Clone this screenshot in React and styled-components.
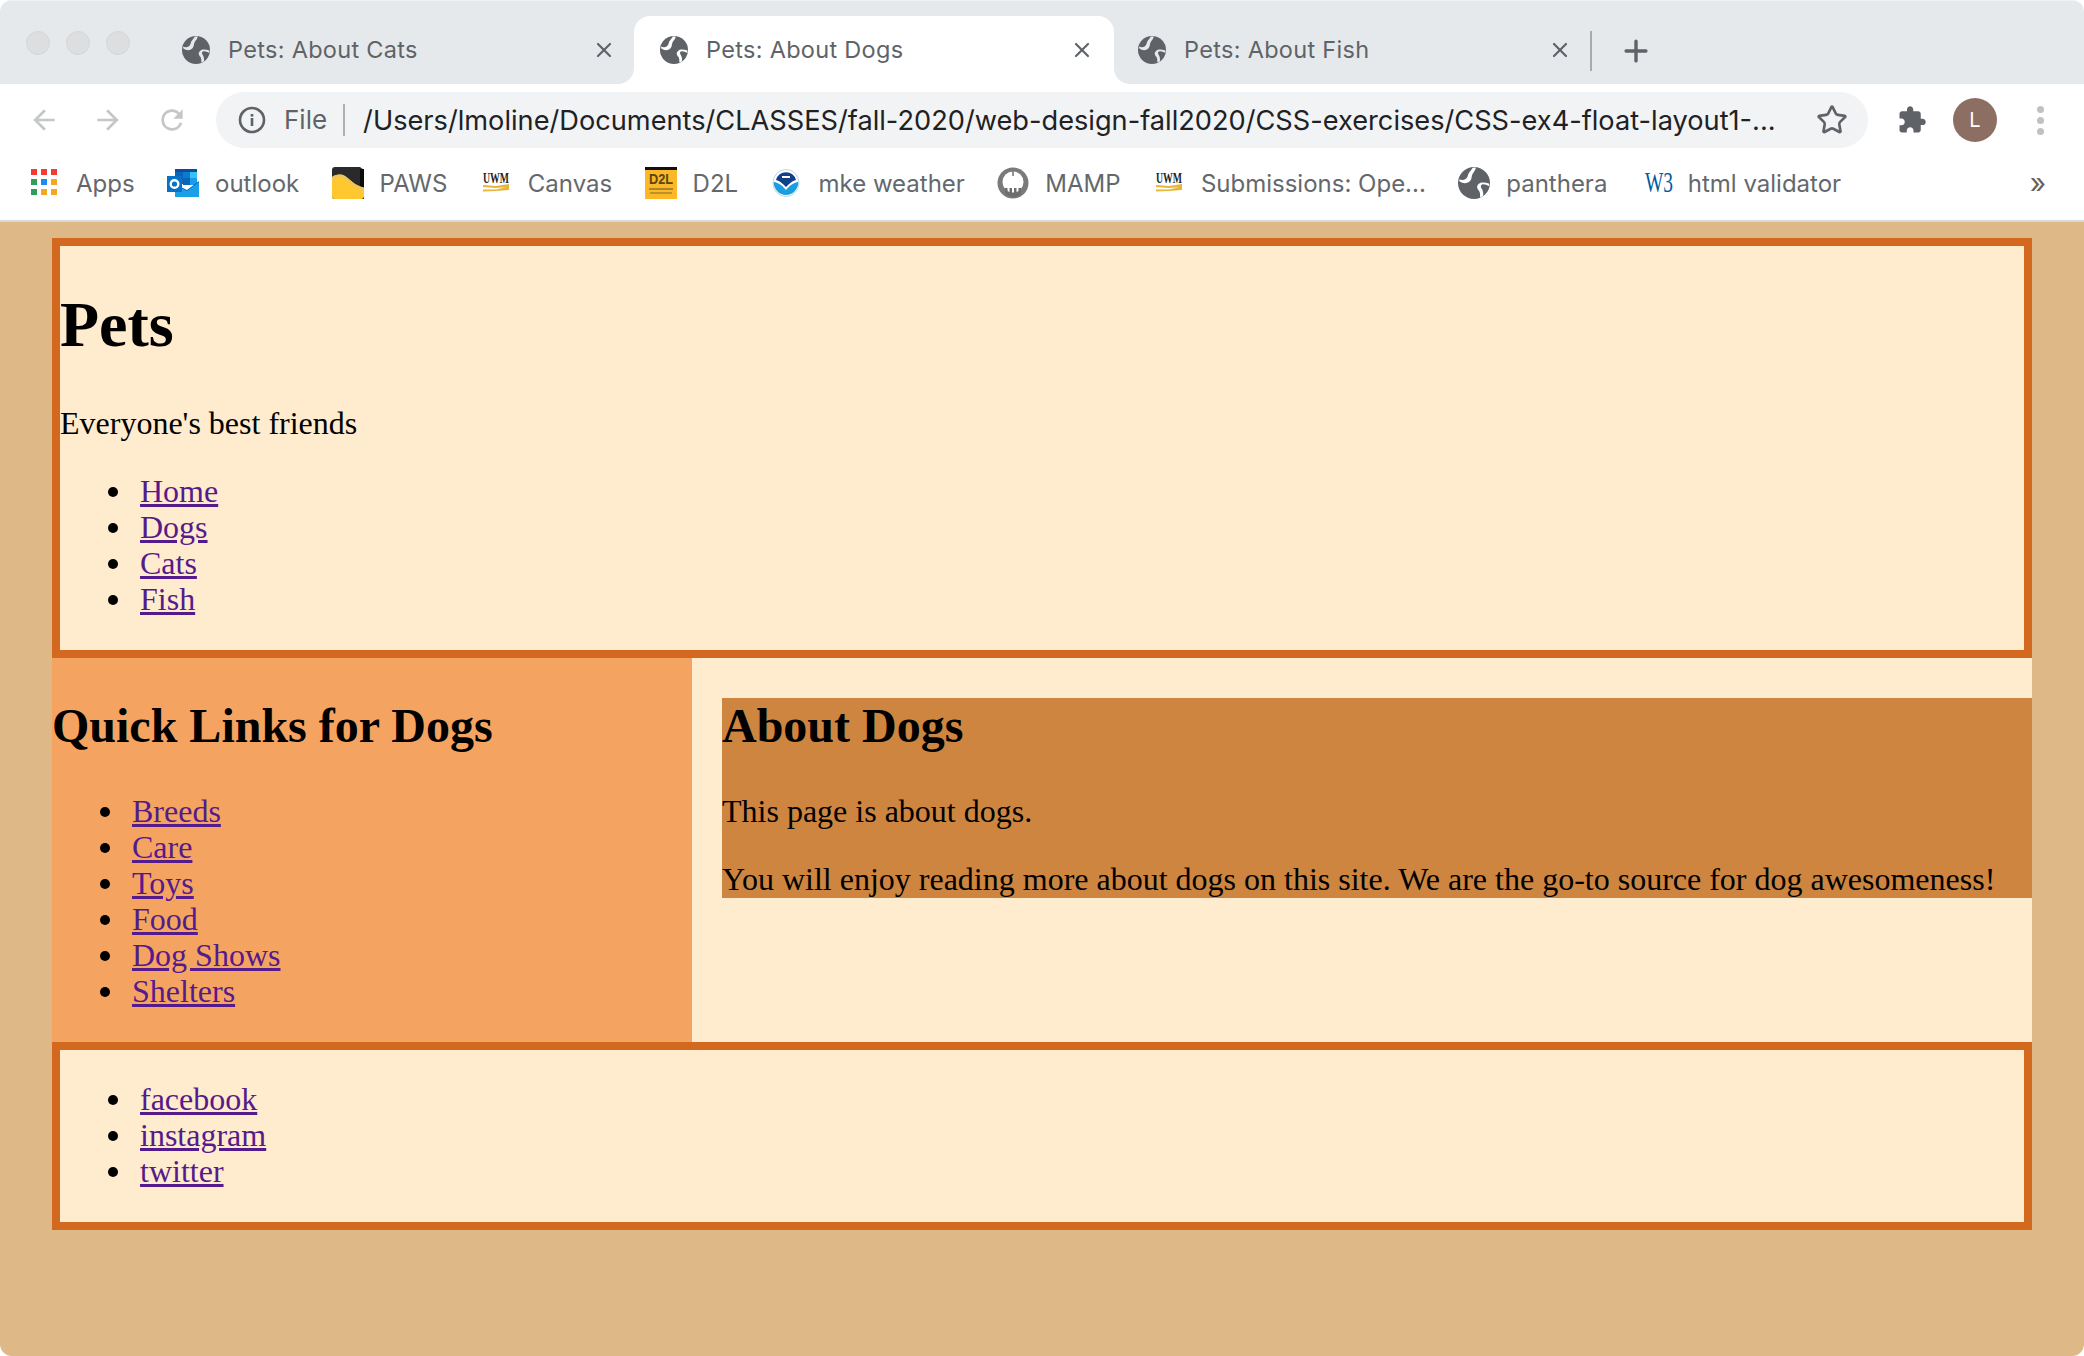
import styled, { createGlobalStyle } from "styled-components";
import { Star, X, Plus } from "lucide-react";

const GlobalStyle = createGlobalStyle`
  html, body {
    margin: 0;
    padding: 0;
    background: #fff;
  }
`;

const Window = styled.div`
  display: flex;
  flex-direction: column;
  width: 2084px;
  height: 1356px;
  overflow: hidden;
  border-radius: 12px;
  background: #fff;
  font-family: Inter, "Liberation Sans", sans-serif;
`;

/* browser chrome */
const TabStrip = styled.div`
  display: flex;
  align-items: flex-end;
  height: 84px;
  box-sizing: border-box;
  border-top: 1px solid #f2f3f4;
  background: #e6e9ec;
`;

const TrafficLights = styled.div`
  display: flex;
  align-self: flex-start;
  gap: 16px;
  width: 156px;
  box-sizing: border-box;
  margin-top: 30px;
  padding-left: 26px;
`;

const Light = styled.span`
  width: 24px;
  height: 24px;
  box-sizing: border-box;
  border: 1px solid #d5d6d8;
  border-radius: 50%;
  background: #dddee0;
`;

const Tab = styled.div`
  position: relative;
  display: flex;
  align-items: center;
  width: 480px;
  height: 68px;
  box-sizing: border-box;
  margin-right: -2px;
  padding: 0 20px 0 26px;
  border-radius: 16px 16px 0 0;
  background: ${(p) => (p.$active ? "#fff" : "transparent")};
  color: #5f6368;

  ${(p) =>
    p.$active &&
    `
    &::before, &::after {
      content: "";
      position: absolute;
      bottom: 0;
      width: 16px;
      height: 16px;
    }
    &::before {
      left: -16px;
      background: radial-gradient(circle at 0 0, #e6e9ec 15.5px, #fff 16.5px);
    }
    &::after {
      right: -16px;
      background: radial-gradient(circle at 100% 0, #e6e9ec 15.5px, #fff 16.5px);
    }
  `}
`;

const TabTitle = styled.span`
  flex: 1;
  margin: 0 0 2px 18px;
  font-size: 23.5px;
  letter-spacing: 0.3px;
  white-space: nowrap;
`;

const TabDivider = styled.span`
  width: 2px;
  height: 40px;
  margin: 0 0 13px 0;
  background: #a6a9ad;
`;

const NewTab = styled.span`
  display: flex;
  margin: 0 0 16px 27px;
  color: #5f6368;
`;

const Toolbar = styled.div`
  display: flex;
  align-items: center;
  height: 64px;
  box-sizing: border-box;
  padding: 8px 0 0 28px;
  background: #fff;
`;

const NavIcon = styled.svg`
  flex: none;
  width: 32px;
  height: 32px;
  margin-right: ${(p) => p.$gap || 32}px;
  fill: #c4c6c8;
`;

const Omnibox = styled.div`
  display: flex;
  align-items: center;
  width: 1652px;
  height: 56px;
  box-sizing: border-box;
  padding: 0 20px 0 22px;
  border-radius: 28px;
  background: #f1f3f4;
`;

const Scheme = styled.span`
  margin-left: 18px;
  padding-right: 16px;
  border-right: 2px solid #aeb1b4;
  color: #5f6368;
  font-size: 26px;
  line-height: 32px;
`;

const Url = styled.span`
  flex: 1;
  margin-left: 18px;
  color: #202124;
  font-size: 27.2px;
  white-space: nowrap;
`;

const ToolbarRight = styled.div`
  display: flex;
  align-items: center;
  margin-left: 29px;
`;

const Avatar = styled.span`
  display: flex;
  align-items: center;
  justify-content: center;
  width: 44px;
  height: 44px;
  margin-left: 26px;
  border-radius: 50%;
  background: #8d6e63;
  color: #fff;
  font-size: 20px;
`;

const MenuDots = styled.span`
  display: flex;
  flex-direction: column;
  gap: 4px;
  margin-left: 40px;

  i {
    width: 7px;
    height: 7px;
    border-radius: 50%;
    background: #bfc1c3;
  }
`;

const Bookmarks = styled.div`
  display: flex;
  align-items: center;
  gap: 32.4px;
  height: 74px;
  box-sizing: border-box;
  padding: 0 0 2px 28px;
  border-bottom: 2px solid #d9d9db;
  background: #fff;
`;

const Bookmark = styled.div`
  display: flex;
  align-items: center;
  gap: 16px;
  color: #64686d;
  font-size: 24px;
  white-space: nowrap;
`;

const BookmarkIcon = styled.svg`
  flex: none;
  width: 32px;
  height: 32px;
  overflow: visible;
`;

const Overflow = styled.span`
  margin-left: auto;
  margin-right: 38px;
  color: #5f6368;
  font-size: 28px;
`;

/* the page itself */
const Page = styled.div`
  flex: 1;
  padding: 16px 52px 0;
  background: #deb887;
  color: #000;
  font-family: "Liberation Serif", "Times New Roman", serif;
  font-size: 32px;
  line-height: 36px;
`;

const Banner = styled.header`
  padding-bottom: 1px;
  border: 8px solid #d2691e;
  background: #ffebcd;
`;

const Title = styled.h1`
  margin: 42px 0 44px;
  font-size: 64px;
  line-height: 73px;
`;

const Tagline = styled.p`
  margin: 32px 0;
`;

const LinkList = styled.ul`
  margin: 32px 0;
  padding-left: 80px;
  list-style: none;

  li {
    position: relative;
  }

  li::before {
    content: "";
    position: absolute;
    top: 14px;
    left: -32px;
    width: 10px;
    height: 10px;
    border-radius: 50%;
    background: #000;
  }

  a {
    color: #551a8b;
  }
`;

const Columns = styled.div`
  display: flex;
  height: 384px;
`;

const Sidebar = styled.aside`
  width: 640px;
  background: #f4a460;
`;

const Heading = styled.h2`
  margin: 0 0 40px;
  font-size: 48px;
  line-height: 55px;
`;

const SidebarHeading = styled(Heading)`
  margin-top: 40px;
`;

const Content = styled.main`
  flex: 1;
  padding: 40px 0 0 30px;
  background: #ffebcd;
`;

const ContentBox = styled.section`
  height: 200px;
  background: #cd853f;

  p {
    margin: 0 0 32px;
  }

  p:last-child {
    margin-bottom: 0;
  }
`;

const Footer = styled.footer`
  border: 8px solid #d2691e;
  background: #ffebcd;

  ul {
    margin: 31px 0 33px;
  }
`;

const Globe = ({ size = 28, cut = "#e6e9ec" }) => (
  <svg viewBox="0 0 24 24" width={size} height={size} style={{ flex: "none" }}>
    <circle cx="12" cy="12" r="12" fill="#5f6368" />
    <path
      fill={cut}
      d="M.9 10.5C4 12.8 7 12.5 9 10.5c1.5-1.5 1-4 2-5.5.8-1.3 2-2.2 2.5-4.6L11 .5C9.5 3 8 4 7.5 6c-.5 1.8-1 3-3 3.5-1.5.3-2.5.2-3.4-.4zM23.5 12.5c-3-.8-6-1.5-8 .3-2 1.6-1 3.6.2 5 .9 1.2 1 3 .8 5l2.3-1c.3-2 0-4-1-5.5-.8-1.2-1-2.3 0-3 1.2-.8 3.4 0 5.6 1.2z"
    />
  </svg>
);

const AppsIcon = () => (
  <BookmarkIcon viewBox="0 0 32 32">
    {["#f33b36", "#f33b36", "#f33b36", "#2f9e5b", "#1e88f5", "#f5a623", "#2f9e5b", "#f5a623", "#f5a623"].map((c, i) => (
      <rect key={i} x={3 + (i % 3) * 10} y={2 + Math.floor(i / 3) * 10} width="6" height="6" fill={c} />
    ))}
  </BookmarkIcon>
);

const OutlookIcon = () => (
  <BookmarkIcon viewBox="0 0 32 32">
    <rect x="8" y="2" width="22" height="3" fill="#0a4f9e" />
    <rect x="8" y="5" width="8" height="12" fill="#0a64b8" />
    <rect x="16" y="5" width="7" height="6" fill="#0f78d4" />
    <rect x="23" y="5" width="7" height="6" fill="#35c3f3" />
    <rect x="16" y="11" width="7" height="7" fill="#0a64b8" />
    <rect x="23" y="11" width="7" height="7" fill="#1c9be8" />
    <path d="M8 17l12 6 12-9v16H8z" fill="#0a64b8" />
    <path d="M8 18l12 6 12-9v15H8z" fill="#1aa0e8" />
    <rect x="0" y="9" width="15" height="16" fill="#0672c6" />
    <circle cx="7.5" cy="17" r="3.8" fill="none" stroke="#fff" strokeWidth="2.4" />
  </BookmarkIcon>
);

const PawsIcon = () => (
  <BookmarkIcon viewBox="0 0 32 32">
    <path d="M3 0h25l4 3v29H3a3 3 0 0 1-3-3V3a3 3 0 0 1 3-3z" fill="#2a2a2a" />
    <rect x="28" y="2" width="4" height="20" fill="#0c0c0c" />
    <path d="M0 10c5-3 9-3 13-1 5 3 9 9 19 12v8a3 3 0 0 1-3 3H3a3 3 0 0 1-3-3z" fill="#ffc82e" />
    <path d="M0 13c5-3 9-3 13-1 5 3 9 9 19 11.500v-3c-10-2-14-8-19-11.500-4-2-8-2-13 1z" fill="#ecc464" />
  </BookmarkIcon>
);

const UwmIcon = () => (
  <BookmarkIcon viewBox="0 0 32 32">
    <text x="16" y="16" textAnchor="middle" textLength="26" lengthAdjust="spacingAndGlyphs" fontFamily="Liberation Serif, serif" fontWeight="700" fontSize="14" fill="#1e1e1e">UWM</text>
    <path d="M3 18l13 1 13-2v3l-13 1-13-1zM3 22.500l13 0 13-3v3.500l-13 1-13 .5z" fill="#e7b53a" />
  </BookmarkIcon>
);

const D2lIcon = () => (
  <BookmarkIcon viewBox="0 0 32 32">
    <rect width="32" height="32" fill="#fdb827" />
    <rect width="32" height="3" fill="#111" />
    <text x="16" y="17" textAnchor="middle" textLength="24" lengthAdjust="spacingAndGlyphs" fontFamily="Liberation Sans, sans-serif" fontWeight="700" fontSize="14" fill="#5a4514">D2L</text>
    <rect x="4" y="21" width="24" height="2" fill="#a98428" />
    <rect x="5" y="25" width="22" height="2" fill="#bd9329" />
  </BookmarkIcon>
);

const NoaaIcon = () => (
  <BookmarkIcon viewBox="0 0 32 32">
    <ellipse cx="16" cy="16" rx="13" ry="13.500" fill="#fff" stroke="#bcd6ea" strokeWidth="1" />
    <path d="M6 13a10.500 11 0 0 1 20 0c-4 1-7 4-10 7-3-3-6-6-10-7z" fill="#123f8c" />
    <path d="M3.700 15c5 .5 9 4 12.300 8 3.300-4 7.300-7.500 12.300-8a12.300 13 0 0 1-24.600 0z" fill="#1b9ee0" />
    <rect x="12" y="9" width="8" height="2" fill="#fff" />
  </BookmarkIcon>
);

const MampIcon = () => (
  <BookmarkIcon viewBox="0 0 32 32">
    <circle cx="16" cy="16" r="15.500" fill="#7a7a7a" />
    <circle cx="16" cy="15" r="10.500" fill="#fff" />
    <path d="M8 27v-6h2.500v4.500h2V21H15v5h2v-5h2.500v4.500h2V21H24v6a12 12 0 0 1-16 0z" fill="#6e6e6e" />
    <rect x="15.200" y="4" width="1.600" height="5" fill="#7a7a7a" />
  </BookmarkIcon>
);

const W3Icon = () => (
  <BookmarkIcon viewBox="0 0 32 32">
    <text x="19" y="25" textAnchor="middle" textLength="28" lengthAdjust="spacingAndGlyphs" fontFamily="Liberation Serif, serif" fontSize="30" fill="#005a9c">W3</text>
  </BookmarkIcon>
);

const bookmarks = [
  { label: "Apps", icon: <AppsIcon /> },
  { label: "outlook", icon: <OutlookIcon /> },
  { label: "PAWS", icon: <PawsIcon /> },
  { label: "Canvas", icon: <UwmIcon /> },
  { label: "D2L", icon: <D2lIcon /> },
  { label: "mke weather", icon: <NoaaIcon /> },
  { label: "MAMP", icon: <MampIcon /> },
  { label: "Submissions: Ope...", icon: <UwmIcon /> },
  { label: "panthera", icon: <Globe size={32} cut="#fff" /> },
  { label: "html validator", icon: <W3Icon /> },
];

const tabs = ["Pets: About Cats", "Pets: About Dogs", "Pets: About Fish"];
const mainLinks = ["Home", "Dogs", "Cats", "Fish"];
const quickLinks = ["Breeds", "Care", "Toys", "Food", "Dog Shows", "Shelters"];
const socialLinks = ["facebook", "instagram", "twitter"];

const Links = ({ items }) => (
  <LinkList>
    {items.map((item) => (
      <li key={item}>
        <a href="#">{item}</a>
      </li>
    ))}
  </LinkList>
);

export default function App() {
  return (
    <Window>
      <GlobalStyle />
      <TabStrip>
        <TrafficLights>
          <Light />
          <Light />
          <Light />
        </TrafficLights>
        {tabs.map((title, i) => (
          <Tab key={title} $active={i === 1}>
            <Globe cut={i === 1 ? "#fff" : "#e6e9ec"} />
            <TabTitle>{title}</TabTitle>
            <X size={24} strokeWidth={2.2} />
          </Tab>
        ))}
        <TabDivider />
        <NewTab>
          <Plus size={34} strokeWidth={2.4} />
        </NewTab>
      </TabStrip>

      <Toolbar>
        <NavIcon viewBox="0 0 24 24">
          <path d="M20 11H7.830l5.590-5.590L12 4l-8 8 8 8 1.410-1.410L7.830 13H20v-2z" />
        </NavIcon>
        <NavIcon viewBox="0 0 24 24">
          <path d="M12 4l-1.410 1.410L16.170 11H4v2h12.170l-5.580 5.590L12 20l8-8z" />
        </NavIcon>
        <NavIcon viewBox="0 0 24 24" $gap={28}>
          <path d="M17.650 6.350A7.958 7.958 0 0 0 12 4c-4.420 0-7.990 3.580-7.990 8s3.570 8 7.990 8c3.730 0 6.840-2.550 7.730-6h-2.080A5.990 5.990 0 0 1 12 18c-3.310 0-6-2.690-6-6s2.690-6 6-6c1.660 0 3.140.690 4.220 1.780L13 11h7V4l-2.350 2.350z" />
        </NavIcon>
        <Omnibox>
          <svg viewBox="0 0 28 28" width="28" height="28" fill="none" style={{ flex: "none" }}>
            <circle cx="14" cy="14" r="12" stroke="#5f6368" strokeWidth="2.6" />
            <rect x="12.700" y="12" width="2.600" height="8" fill="#5f6368" />
            <rect x="12.700" y="8" width="2.600" height="2.600" fill="#5f6368" />
          </svg>
          <Scheme>File</Scheme>
          <Url>/Users/lmoline/Documents/CLASSES/fall-2020/web-design-fall2020/CSS-exercises/CSS-ex4-float-layout1-...</Url>
          <Star size={32} strokeWidth={2} color="#5f6368" />
        </Omnibox>
        <ToolbarRight>
          <svg viewBox="0 0 24 24" width="30" height="30" fill="#5f6368">
            <path d="M20.500 11H19V7c0-1.100-.9-2-2-2h-4V3.500C13 2.120 11.880 1 10.500 1S8 2.120 8 3.500V5H4c-1.100 0-1.990.9-1.990 2v3.800H3.500c1.490 0 2.700 1.210 2.700 2.700s-1.210 2.700-2.700 2.700H2V20c0 1.100.9 2 2 2h3.800v-1.500c0-1.490 1.210-2.700 2.700-2.700 1.490 0 2.700 1.210 2.700 2.700V22H17c1.100 0 2-.9 2-2v-4h1.500c1.380 0 2.500-1.120 2.500-2.500S21.880 11 20.500 11z" />
          </svg>
          <Avatar>L</Avatar>
          <MenuDots>
            <i />
            <i />
            <i />
          </MenuDots>
        </ToolbarRight>
      </Toolbar>

      <Bookmarks>
        {bookmarks.map((b) => (
          <Bookmark key={b.label}>
            {b.icon}
            {b.label}
          </Bookmark>
        ))}
        <Overflow>»</Overflow>
      </Bookmarks>

      <Page>
        <Banner>
          <Title>Pets</Title>
          <Tagline>Everyone's best friends</Tagline>
          <Links items={mainLinks} />
        </Banner>
        <Columns>
          <Sidebar>
            <SidebarHeading>Quick Links for Dogs</SidebarHeading>
            <Links items={quickLinks} />
          </Sidebar>
          <Content>
            <ContentBox>
              <Heading>About Dogs</Heading>
              <p>This page is about dogs.</p>
              <p>You will enjoy reading more about dogs on this site. We are the go-to source for dog awesomeness!</p>
            </ContentBox>
          </Content>
        </Columns>
        <Footer>
          <Links items={socialLinks} />
        </Footer>
      </Page>
    </Window>
  );
}
